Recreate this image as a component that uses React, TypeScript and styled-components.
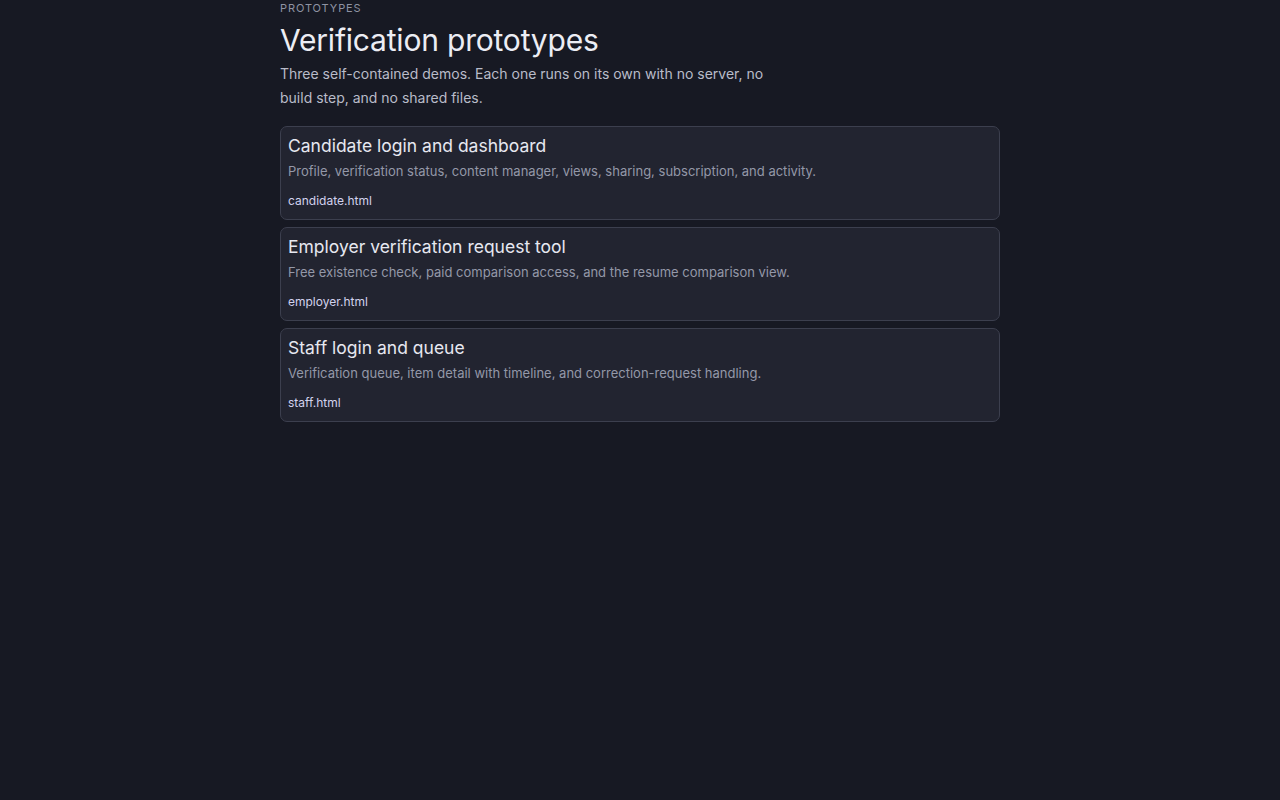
import { FC } from 'react'
import styled, { createGlobalStyle } from 'styled-components'

const GlobalStyle = createGlobalStyle`
  html, body {
    margin: 0;
    padding: 0;
    background: #171923;
    font-family: Inter, "Noto Sans", "Liberation Sans", sans-serif;
    -webkit-font-smoothing: antialiased;
  }
`

const demos = [
  {
    title: 'Candidate login and dashboard',
    desc: 'Profile, verification status, content manager, views, sharing, subscription, and activity.',
    file: 'candidate.html',
  },
  {
    title: 'Employer verification request tool',
    desc: 'Free existence check, paid comparison access, and the resume comparison view.',
    file: 'employer.html',
  },
  {
    title: 'Staff login and queue',
    desc: 'Verification queue, item detail with timeline, and correction-request handling.',
    file: 'staff.html',
  },
]

const App: FC = () => {
  return (
    <>
      <GlobalStyle />
      <Page>
        <Eyebrow>PROTOTYPES</Eyebrow>
        <Title>Verification prototypes</Title>
        <Lead>
          Three self-contained demos. Each one runs on its own with no server, no build step, and no shared files.
        </Lead>
        <List>
          {demos.map((d) => (
            <Card key={d.file} href={d.file}>
              <CardTitle>{d.title}</CardTitle>
              <CardDesc>{d.desc}</CardDesc>
              <FileName>{d.file}</FileName>
            </Card>
          ))}
        </List>
      </Page>
    </>
  )
}

export default App

const Page = styled.main`
  width: 720px;
  margin: 0 auto;
  min-height: 800px;
  box-sizing: border-box;
`

const Eyebrow = styled.div`
  font-size: 11px;
  line-height: 16px;
  letter-spacing: 0.9px;
  color: #8e92a2;
`

const Title = styled.h1`
  margin: 4px 0 2px;
  font-size: 30px;
  line-height: 40px;
  font-weight: 400;
  letter-spacing: -0.2px;
  color: #ecedf4;
`

const Lead = styled.p`
  margin: 0;
  max-width: 500px;
  font-size: 14px;
  line-height: 24px;
  color: #b9bcc9;
`

const List = styled.div`
  display: flex;
  flex-direction: column;
  gap: 7px;
  margin-top: 16px;
`

const Card = styled.a`
  display: block;
  padding: 8px 7px 9px;
  background: #222430;
  border: 1px solid #3c3f4e;
  border-radius: 7px;
  text-decoration: none;
`

const CardTitle = styled.div`
  font-size: 17.5px;
  line-height: 22px;
  font-weight: 400;
  color: #e7e8f0;
`

const CardDesc = styled.div`
  margin-top: 4px;
  font-size: 13px;
  line-height: 20px;
  color: #9498a8;
`

const FileName = styled.div`
  margin-top: 11px;
  font-size: 12px;
  line-height: 18px;
  color: #d2d2ee;
`
